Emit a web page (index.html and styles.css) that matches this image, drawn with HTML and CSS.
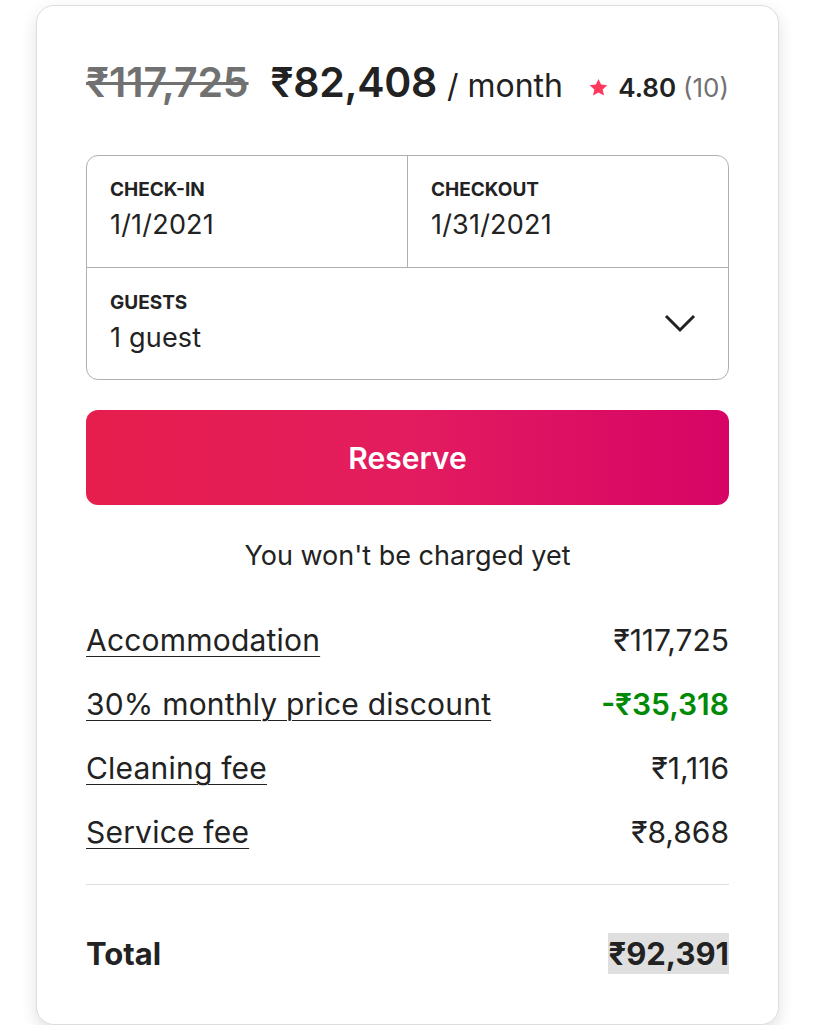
FILE: index.html
```html
<!DOCTYPE html>
<html lang="en">
<head>
    <meta charset="UTF-8">
    <meta name="viewport" content="width=device-width, initial-scale=1.0">
    <title>Booking</title>
    <link rel="stylesheet" href="styles.css">
</head>
<body>
    <div class="card">
        <div class="price-row">
            <span class="old-price">₹117,725</span>
            <span class="new-price">₹82,408</span>
            <span class="per">/ month</span>
            <span class="rating">
                <svg class="star" viewBox="0 0 32 32" width="19" height="19"><path d="M16 1.5l4.4 9.6 10.4 1.1-7.8 7.1 2.2 10.3L16 24.4l-9.2 5.2L9 19.3 1.2 12.2l10.4-1.1z" fill="#ff385c"/></svg>
                <b>4.80</b>
                <span class="count">(10)</span>
            </span>
        </div>

        <!-- Dates and guests -->
        <div class="picker">
            <div class="dates">
                <div class="field">
                    <div class="label">CHECK-IN</div>
                    <div class="value">1/1/2021</div>
                </div>
                <div class="field field-right">
                    <div class="label">CHECKOUT</div>
                    <div class="value">1/31/2021</div>
                </div>
            </div>
            <div class="field guests">
                <div>
                    <div class="label">GUESTS</div>
                    <div class="value">1 guest</div>
                </div>
                <svg class="chevron" viewBox="0 0 32 20" width="32" height="20"><path d="M2 2l14 14L30 2" fill="none" stroke="#222" stroke-width="3"/></svg>
            </div>
        </div>

        <button class="reserve">Reserve</button>
        <p class="note">You won't be charged yet</p>

        <!-- Price breakdown -->
        <div class="lines">
            <div class="line"><a href="#">Accommodation</a><span>₹117,725</span></div>
            <div class="line"><a href="#">30% monthly price discount</a><span class="discount">-₹35,318</span></div>
            <div class="line"><a href="#">Cleaning fee</a><span>₹1,116</span></div>
            <div class="line"><a href="#">Service fee</a><span>₹8,868</span></div>
        </div>

        <div class="total">
            <span>Total</span>
            <span class="total-value">₹92,391</span>
        </div>
    </div>
</body>
</html>
```

FILE: styles.css
```css
body {
    font-family: 'Inter', 'Noto Sans', sans-serif;
    margin: 0;
    padding: 5px 0 0 36px;
    background-color: #fff;
    color: #222;
}

.card {
    box-sizing: border-box;
    width: 743px;
    height: 1020px;
    padding: 0 49px;
    border: 1px solid #dddddd;
    border-radius: 18px;
    box-shadow: 0 6px 16px rgba(0, 0, 0, 0.12);
    background-color: #fff;
}

/* Price header */
.price-row {
    display: flex;
    align-items: baseline;
    height: 144px;
    padding-top: 51px;
    box-sizing: border-box;
}

.old-price {
    font-size: 41px;
    font-weight: 600;
    color: #717171;
    text-decoration: line-through;
    text-decoration-thickness: 3px;
    margin-right: 22px;
    letter-spacing: -0.1px;
}

.new-price {
    font-size: 41px;
    font-weight: 600;
    margin-right: 10px;
    letter-spacing: -0.3px;
}

.per {
    font-size: 32px;
    font-weight: 400;
}

.rating {
    margin-left: auto;
    font-size: 26px;
    display: flex;
    align-items: baseline;
    gap: 7px;
}

.rating b {
    font-weight: 600;
}

.count {
    color: #717171;
}

.star {
    align-self: center;
    margin-right: 3px;
}

/* Date / guest picker */
.picker {
    border: 1px solid #b0b0b0;
    border-radius: 12px;
    margin-top: 5px;
}

.dates {
    display: flex;
    border-bottom: 1px solid #b0b0b0;
}

.field {
    flex: 1;
    height: 111px;
    box-sizing: border-box;
    padding: 22px 23px 0;
}

.field-right {
    border-left: 1px solid #b0b0b0;
}

.label {
    font-size: 19px;
    font-weight: 700;
}

.value {
    font-size: 27px;
    margin-top: 7px;
    letter-spacing: 0.2px;
}

.guests {
    display: flex;
    justify-content: space-between;
    align-items: center;
    padding-top: 0;
    padding-right: 32px;
}

.guests > div {
    margin-top: -3px;
}

/* Reserve button */
.reserve {
    display: block;
    width: 100%;
    height: 95px;
    margin-top: 30px;
    border: none;
    border-radius: 12px;
    background: linear-gradient(to right, #e61e4d, #e31c5f, #d70466);
    color: #fff;
    font-family: inherit;
    font-size: 30px;
    font-weight: 600;
}

.note {
    text-align: center;
    font-size: 27px;
    margin: 34px 0 0;
}

/* Breakdown */
.lines {
    margin-top: 36px;
    padding-bottom: 20px;
    border-bottom: 1px solid #dddddd;
}

.line {
    display: flex;
    justify-content: space-between;
    font-size: 30px;
    height: 64px;
    align-items: center;
}

.line a {
    color: #222;
    text-decoration: underline;
    text-decoration-thickness: 1px;
    text-underline-offset: 5px;
    letter-spacing: 0.2px;
}

.discount {
    color: #008a05;
    font-weight: 600;
}

.total {
    display: flex;
    justify-content: space-between;
    align-items: center;
    margin-top: 48px;
    font-size: 31px;
    font-weight: 700;
}

.total-value {
    background-color: #dfdfdf;
    padding: 2px 0;
}
```
